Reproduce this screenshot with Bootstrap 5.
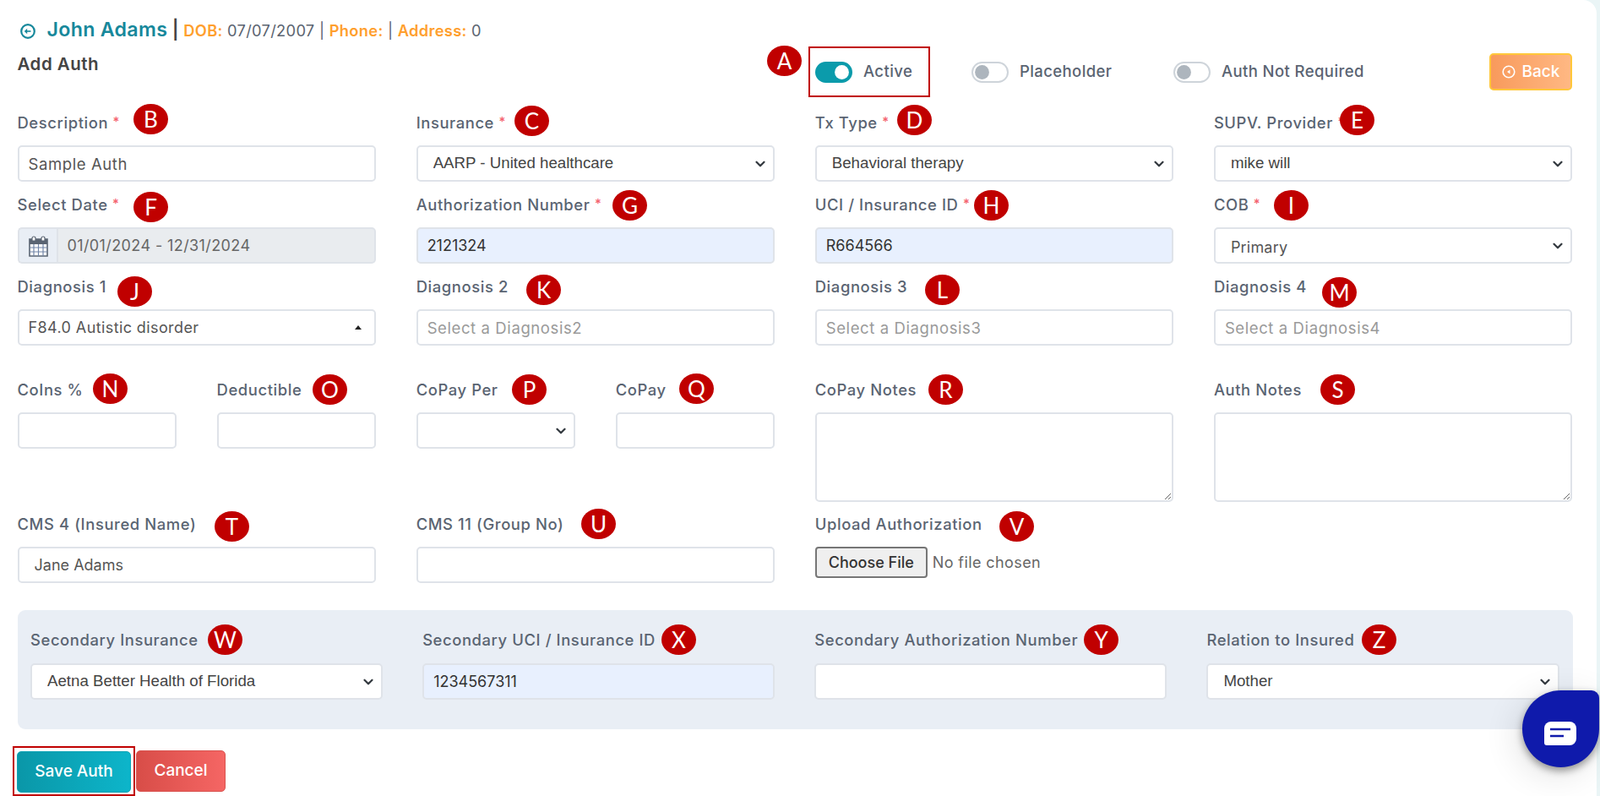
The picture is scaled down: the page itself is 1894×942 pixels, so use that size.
<!DOCTYPE html>
<html lang="en">
<head>
<meta charset="utf-8">
<title>Add Auth</title>
<link href="https://cdn.jsdelivr.net/npm/bootstrap@5.3.0/dist/css/bootstrap.min.css" rel="stylesheet">
<style>
html,body{height:100%;overflow:hidden}
body{background:#eaf5f6;font-family:Inter,"Liberation Sans",sans-serif;color:#555}
.sheet{position:relative;background:#fff;width:1890px;height:942px;border-top-right-radius:16px;padding:20px 29px 0 20.5px}
.pt-head{height:30px;line-height:30px;font-size:18.3px;letter-spacing:.3px;color:#5b6470;white-space:nowrap}
.pt-head svg{width:18px;height:18px;margin:0 14px 0 3px;vertical-align:-3px}
.pt-name{color:#17889b;font-size:23.2px;font-weight:600;letter-spacing:.3px}
.pt-sep{color:#444;font-size:22px;font-weight:600}
.pt-key{color:#ff9f2e;font-weight:600}
.top-bar{height:60px;margin:5px 0 18px 0}
.auth-title{width:936.5px;align-self:flex-start;font-size:20.5px;letter-spacing:.5px;font-weight:600;color:#444;line-height:24px;margin-top:9px}
.sw-box{width:144px;height:60px;border:2px solid #c00000;padding-left:6px;margin-right:49px}
.sw-plain{width:239px}
.sw-last{flex:1}
.form-switch.sw-item{padding:0;margin:0;min-height:0}
.form-switch .sw-input{width:44px;height:25px;margin:0 13px 0 0;float:none;border:2px solid #ced4da;--bs-form-switch-bg:url("data:image/svg+xml,%3csvg xmlns='http://www.w3.org/2000/svg' viewBox='-4 -4 8 8'%3e%3ccircle r='3.2' fill='%23adb5bd'/%3e%3c/svg%3e")}
.form-switch .sw-input:checked{background-color:#0b9bab;border-color:#0b9bab;--bs-form-switch-bg:url("data:image/svg+xml,%3csvg xmlns='http://www.w3.org/2000/svg' viewBox='-4 -4 8 8'%3e%3ccircle r='3.2' fill='%23fff'/%3e%3c/svg%3e")}
.sw-text{font-size:18.5px;letter-spacing:.4px;font-weight:500;color:#5a6472}
.btn-back{width:98px;height:44px;background:linear-gradient(90deg,#f89a5c,#ffb883);border:2px solid #ffc73a;border-radius:5px;color:#fff;font-size:19px;font-weight:500;padding:0;display:flex;align-items:center;justify-content:center;gap:8px}
.btn-back svg{width:16px;height:16px}
.fld-row{--bs-gutter-x:48px;--bs-gutter-y:0}
.fld-label{display:block;height:24px;line-height:24px;margin-bottom:15px;font-size:18.4px;letter-spacing:.6px;font-weight:500;color:#5a6472;white-space:nowrap}
.req{color:#f4606c;font-size:15px;position:relative;top:-3px}
.fld-input,.fld-select{height:43px;border:2px solid #dfe3e9;border-radius:5px;font-size:18.5px;letter-spacing:.6px;color:#555;box-shadow:none}
.fld-input{padding:0 11px}
.fld-input::placeholder{color:#9a9a9a}
.fld-plain{font-size:18px;letter-spacing:0;padding-left:13px}
.form-select.fld-select{padding:0 30px 0 18px;font-family:"Liberation Sans",sans-serif;font-size:18.7px;letter-spacing:0;color:#444;background-position:right 7px center;background-size:16px 12px;background-image:url("data:image/svg+xml,%3csvg xmlns='http://www.w3.org/2000/svg' viewBox='0 0 16 16'%3e%3cpath fill='none' stroke='%23343a40' stroke-linecap='round' stroke-linejoin='round' stroke-width='3' d='m2 5 6 6 6-6'/%3e%3c/svg%3e")}
.form-select.fld-select.sel-alt{font-family:Inter,sans-serif;font-size:18px;letter-spacing:.2px;color:#555;padding-top:3px}
.fld-auto{background:#e8f0fe;color:#333;font-size:18px;letter-spacing:0}
.fld-gap{margin-bottom:15px}
.fld-gap-lg{margin-bottom:40px}
.dropish{display:flex;align-items:center;justify-content:space-between;padding:0 15px 0 11px;font-size:18px;letter-spacing:.4px}
.dropish i{border:4px solid transparent;border-top:0;border-bottom:5px solid #222}
.date-add{width:47px;height:43px;background:#e9eef5;border:2px solid #dfe3e9;border-right:0;border-radius:5px 0 0 5px;display:flex;align-items:center;justify-content:center;padding:0}
.date-add svg{width:25px;height:26px}
.date-field{background:#e9ecef!important;border-radius:0 5px 5px 0!important;color:#666;padding-left:11px;font-size:18px;letter-spacing:.4px}
.fld-area{height:106px;display:block;border:2px solid #dfe3e9;border-radius:5px;margin-bottom:14px;box-shadow:none}
.fld-file{font-family:Inter,sans-serif;font-size:18px;letter-spacing:.4px;color:#666;width:100%;height:37px}
.fld-file::file-selector-button{height:37px;width:133px;margin-right:6px;padding:0;background:#efefef;border:2px solid #767676;border-radius:4px;color:#333;font:500 18px Inter,sans-serif}
.sec-panel{background:#e9eef5;border-radius:9px;margin:32px -.5px 0 .5px;padding:23px 16px 35px 15px;height:141px}
.sec-row{--bs-gutter-x:47px;--bs-gutter-y:0}
.sec-panel .fld-label{margin-bottom:16px}
.foot-bar{margin:20px 0 0 -5.5px}
.save-box{border:2px solid #c00000;padding:4px 3px;height:59px;width:145px;margin-right:1px}
.btn-save,.btn-off{height:49px;border-radius:5px;color:#fff;font-size:19px;font-weight:500;padding:0}
.btn-save{width:135px;background:linear-gradient(90deg,#0a97a8,#0db5ca);border:1px solid #0da3b5}
.btn-off{width:106px;background:linear-gradient(90deg,#d84d48,#f56664);border:1px solid #d9534f}
.btn-save:hover,.btn-off:hover{color:#fff}
.chat-bub{position:absolute;left:1802px;top:817px;width:91px;height:91px;background:#0f1aab;border-radius:50% 9px 50% 50%;box-shadow:0 4px 10px rgba(0,0,0,.4),-6px 8px 40px rgba(0,0,0,.12);display:flex;align-items:center;justify-content:center}
.chat-bub svg{width:38px;height:28px;margin:10px 0 0 -2px}
.anno{position:absolute;width:41px;height:36px;border-radius:50%;background:#c00000;color:#fff;font-family:Lato,"Liberation Sans",sans-serif;font-size:26px;line-height:36px;text-align:center;margin:-18px 0 0 -20px}
.an-a{left:928px;top:72px}.an-b{left:178px;top:141px}.an-c{left:629px;top:143px}.an-d{left:1082px;top:142px}.an-e{left:1606px;top:142px}
.an-f{left:178px;top:245px}.an-g{left:745px;top:243px}.an-h{left:1173px;top:243px}.an-i{left:1528px;top:243px}
.an-j{left:159px;top:345px}.an-k{left:643px;top:343px}.an-l{left:1115px;top:343px}.an-m{left:1585px;top:346px}
.an-n{left:130px;top:460px}.an-o{left:390px;top:461px}.an-p{left:626px;top:461px}.an-q{left:824px;top:460px}.an-r{left:1119px;top:461px}.an-s{left:1583px;top:461px}
.an-t{left:274px;top:623px}.an-u{left:708px;top:620px}.an-v{left:1203px;top:623px}
.an-w{left:266px;top:757px}.an-x{left:803px;top:757px}.an-y{left:1303px;top:757px}.an-z{left:1632px;top:757px}
</style>
</head>
<body>
<main class="sheet">
  <div class="pt-head">
    <svg viewBox="0 0 18 18" fill="none" stroke="#17889b" stroke-width="2.2"><circle cx="9" cy="9" r="7.8"/><path d="M12.500 9H7" stroke-width="1.6"/><path d="M8.200 5.800 4.800 9l3.400 3.200z" fill="#17889b" stroke="none"/></svg><span class="pt-name">John Adams</span> <span class="pt-sep">|</span> <span class="pt-key">DOB:</span> 07/07/2007 | <span class="pt-key">Phone:</span> | <span class="pt-key">Address:</span> 0
  </div>

  <div class="top-bar d-flex align-items-center">
    <div class="auth-title">Add Auth</div>
    <div class="sw-box d-flex align-items-center">
      <div class="form-check form-switch sw-item d-flex align-items-center"><input class="form-check-input sw-input" type="checkbox" checked aria-label="Active"><span class="sw-text">Active</span></div>
    </div>
    <div class="sw-plain">
      <div class="form-check form-switch sw-item d-flex align-items-center"><input class="form-check-input sw-input" type="checkbox" aria-label="Placeholder"><span class="sw-text">Placeholder</span></div>
    </div>
    <div class="sw-last">
      <div class="form-check form-switch sw-item d-flex align-items-center"><input class="form-check-input sw-input" type="checkbox" aria-label="Auth Not Required"><span class="sw-text">Auth Not Required</span></div>
    </div>
    <button class="btn btn-back" type="button"><svg viewBox="0 0 16 16" fill="none" stroke="#fff" stroke-width="1.6"><circle cx="8" cy="8" r="6.800"/><path d="M9.500 5.500 6 8l3.500 2.500z" fill="#fff" stroke="none"/></svg>Back</button>
  </div>

  <div class="row fld-row">
    <div class="col-3 fld-gap"><label class="fld-label">Description <span class="req">*</span></label><input class="form-control fld-input" value="Sample Auth"></div>
    <div class="col-3 fld-gap"><label class="fld-label">Insurance <span class="req">*</span></label><select class="form-select fld-select"><option>AARP - United healthcare</option></select></div>
    <div class="col-3 fld-gap"><label class="fld-label">Tx Type <span class="req">*</span></label><select class="form-select fld-select"><option>Behavioral therapy</option></select></div>
    <div class="col-3 fld-gap"><label class="fld-label">SUPV. Provider <span class="req">*</span></label><select class="form-select fld-select"><option>mike will</option></select></div>

    <div class="col-3 fld-gap"><label class="fld-label">Select Date <span class="req">*</span></label>
      <div class="input-group">
        <span class="input-group-text date-add"><svg viewBox="0 0 25 26"><path d="M2 5h21v20H2z" fill="#fff" stroke="#5a6472" stroke-width="1.600"/><path d="M2 5h21v6H2z" fill="#5a6472"/><path d="M7 2a2 2 0 0 1 2 2v3H5V4a2 2 0 0 1 2-2zM18 2a2 2 0 0 1 2 2v3h-4V4a2 2 0 0 1 2-2z" fill="#fff" stroke="#5a6472" stroke-width="1.200"/><path d="M2 15h21M2 20h21M7 11v14M12.500 11v14M18 11v14" stroke="#7286a8" stroke-width="1.200" fill="none"/></svg></span>
        <input class="form-control fld-input date-field" value="01/01/2024 - 12/31/2024" disabled>
      </div>
    </div>
    <div class="col-3 fld-gap"><label class="fld-label">Authorization Number <span class="req">*</span></label><input class="form-control fld-input fld-auto" value="2121324"></div>
    <div class="col-3 fld-gap"><label class="fld-label">UCI / Insurance ID <span class="req">*</span></label><input class="form-control fld-input fld-auto" value="R664566"></div>
    <div class="col-3 fld-gap"><label class="fld-label">COB <span class="req">*</span></label><select class="form-select fld-select sel-alt"><option>Primary</option></select></div>

    <div class="col-3 fld-gap-lg"><label class="fld-label">Diagnosis 1</label><div class="form-control fld-input dropish"><span>F84.0 Autistic disorder</span><i></i></div></div>
    <div class="col-3 fld-gap-lg"><label class="fld-label">Diagnosis 2</label><input class="form-control fld-input" placeholder="Select a Diagnosis2"></div>
    <div class="col-3 fld-gap-lg"><label class="fld-label">Diagnosis 3</label><input class="form-control fld-input" placeholder="Select a Diagnosis3"></div>
    <div class="col-3 fld-gap-lg"><label class="fld-label">Diagnosis 4</label><input class="form-control fld-input" placeholder="Select a Diagnosis4"></div>

    <div class="col-3"><div class="row fld-row">
      <div class="col-6"><label class="fld-label">CoIns %</label><input class="form-control fld-input" aria-label="CoIns %"></div>
      <div class="col-6"><label class="fld-label">Deductible</label><input class="form-control fld-input" aria-label="Deductible"></div>
    </div></div>
    <div class="col-3"><div class="row fld-row">
      <div class="col-6"><label class="fld-label">CoPay Per</label><select class="form-select fld-select" aria-label="CoPay Per"><option></option></select></div>
      <div class="col-6"><label class="fld-label">CoPay</label><input class="form-control fld-input" aria-label="CoPay"></div>
    </div></div>
    <div class="col-3"><label class="fld-label">CoPay Notes</label><textarea class="form-control fld-area" aria-label="CoPay Notes"></textarea></div>
    <div class="col-3"><label class="fld-label">Auth Notes</label><textarea class="form-control fld-area" aria-label="Auth Notes"></textarea></div>

    <div class="col-3"><label class="fld-label">CMS 4 (Insured Name)</label><input class="form-control fld-input fld-plain" value=" Jane Adams"></div>
    <div class="col-3"><label class="fld-label">CMS 11 (Group No)</label><input class="form-control fld-input" aria-label="CMS 11"></div>
    <div class="col-3"><label class="fld-label">Upload Authorization</label><input class="fld-file" type="file" aria-label="Upload Authorization"></div>
  </div>

  <section class="sec-panel">
    <div class="row sec-row">
      <div class="col-3"><label class="fld-label">Secondary Insurance</label><select class="form-select fld-select"><option>Aetna Better Health of Florida</option></select></div>
      <div class="col-3"><label class="fld-label">Secondary UCI / Insurance ID</label><input class="form-control fld-input fld-auto" value="1234567311"></div>
      <div class="col-3"><label class="fld-label">Secondary Authorization Number</label><input class="form-control fld-input" aria-label="Secondary Authorization Number"></div>
      <div class="col-3"><label class="fld-label">Relation to Insured</label><select class="form-select fld-select"><option>Mother</option></select></div>
    </div>
  </section>

  <div class="foot-bar d-flex align-items-center">
    <div class="save-box"><button class="btn btn-save" type="button">Save Auth</button></div>
    <button class="btn btn-off" type="button">Cancel</button>
  </div>

  <div class="anno an-a">A</div><div class="anno an-b">B</div><div class="anno an-c">C</div><div class="anno an-d">D</div><div class="anno an-e">E</div>
  <div class="anno an-f">F</div><div class="anno an-g">G</div><div class="anno an-h">H</div><div class="anno an-i">I</div>
  <div class="anno an-j">J</div><div class="anno an-k">K</div><div class="anno an-l">L</div><div class="anno an-m">M</div>
  <div class="anno an-n">N</div><div class="anno an-o">O</div><div class="anno an-p">P</div><div class="anno an-q">Q</div><div class="anno an-r">R</div><div class="anno an-s">S</div>
  <div class="anno an-t">T</div><div class="anno an-u">U</div><div class="anno an-v">V</div>
  <div class="anno an-w">W</div><div class="anno an-x">X</div><div class="anno an-y">Y</div><div class="anno an-z">Z</div>

  <div class="chat-bub"><svg viewBox="0 0 38 28"><path d="M8 0h22a8 8 0 0 1 8 8v12a8 8 0 0 1-8 8H3a3 3 0 0 1-3-3V8a8 8 0 0 1 8-8z" fill="#fff"/><path d="M7 9h24M7 17h16" stroke="#0f1aab" stroke-width="2.500" fill="none"/></svg></div>
</main>
<script src="https://cdn.jsdelivr.net/npm/bootstrap@5.3.0/dist/js/bootstrap.bundle.min.js"></script>
</body>
</html>
